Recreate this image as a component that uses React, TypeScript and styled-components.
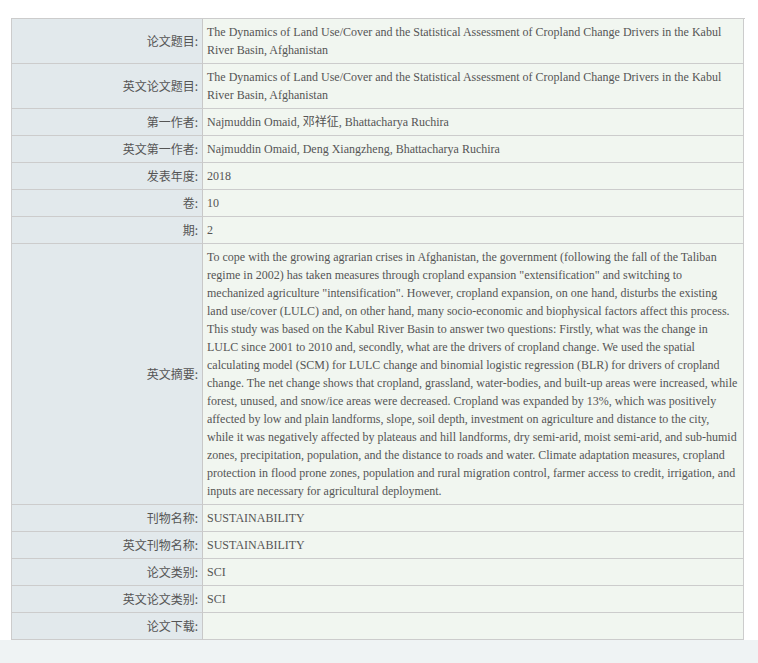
import React from 'react';
import styled, { createGlobalStyle } from 'styled-components';

const GlobalStyle = createGlobalStyle`
  html, body {
    margin: 0;
    padding: 0;
    background: #ffffff;
  }
`;

const Page = styled.div`
  padding: 18px 0 0 11px;
`;

const InfoGrid = styled.div`
  display: grid;
  grid-template-columns: 191px 541px;
  width: 733px;
  border-top: 1px solid #cccccc;
  border-left: 1px solid #cccccc;
`;

const Label = styled.div`
  display: flex;
  align-items: center;
  justify-content: flex-end;
  padding: 4px 4px 4px 4px;
  background: #e2e9ec;
  border-right: 1px solid #c8c8c8;
  border-bottom: 1px solid #cccccc;
  font-family: 'Noto Sans CJK SC', 'Liberation Sans', sans-serif;
  font-size: 12px;
  line-height: 18px;
  color: #555555;
`;

const Value = styled.div`
  padding: 4px 5px 4px 4px;
  background: #f1f6f0;
  border-right: 1px solid #cccccc;
  border-bottom: 1px solid #cccccc;
  font-family: 'Liberation Serif', 'Times New Roman', 'Noto Sans CJK SC', serif;
  font-size: 12px;
  line-height: 18px;
  color: #555555;
  min-height: 18px;
`;

const Footer = styled.div`
  height: 40px;
  margin-left: -11px;
  background: #eff3f4;
`;

interface Row {
  label: string;
  value: string;
}

const title =
  'The Dynamics of Land Use/Cover and the Statistical Assessment of Cropland Change Drivers in the Kabul River Basin, Afghanistan';

const abstract =
  'To cope with the growing agrarian crises in Afghanistan, the government (following the fall of the Taliban regime in 2002) has taken measures through cropland expansion "extensification" and switching to mechanized agriculture "intensification". However, cropland expansion, on one hand, disturbs the existing land use/cover (LULC) and, on other hand, many socio-economic and biophysical factors affect this process. This study was based on the Kabul River Basin to answer two questions: Firstly, what was the change in LULC since 2001 to 2010 and, secondly, what are the drivers of cropland change. We used the spatial calculating model (SCM) for LULC change and binomial logistic regression (BLR) for drivers of cropland change. The net change shows that cropland, grassland, water-bodies, and built-up areas were increased, while forest, unused, and snow/ice areas were decreased. Cropland was expanded by 13%, which was positively affected by low and plain landforms, slope, soil depth, investment on agriculture and distance to the city, while it was negatively affected by plateaus and hill landforms, dry semi-arid, moist semi-arid, and sub-humid zones, precipitation, population, and the distance to roads and water. Climate adaptation measures, cropland protection in flood prone zones, population and rural migration control, farmer access to credit, irrigation, and inputs are necessary for agricultural deployment.';

const rows: Row[] = [
  { label: '论文题目', value: title },
  { label: '英文论文题目', value: title },
  { label: '第一作者', value: 'Najmuddin Omaid, 邓祥征, Bhattacharya Ruchira' },
  { label: '英文第一作者', value: 'Najmuddin Omaid, Deng Xiangzheng, Bhattacharya Ruchira' },
  { label: '发表年度', value: '2018' },
  { label: '卷', value: '10' },
  { label: '期', value: '2' },
  { label: '英文摘要', value: abstract },
  { label: '刊物名称', value: 'SUSTAINABILITY' },
  { label: '英文刊物名称', value: 'SUSTAINABILITY' },
  { label: '论文类别', value: 'SCI' },
  { label: '英文论文类别', value: 'SCI' },
  { label: '论文下载', value: '' },
];

export default function App(): JSX.Element {
  return (
    <>
      <GlobalStyle />
      <Page>
        <InfoGrid>
          {rows.map((row: Row, index: number) => (
            <React.Fragment key={index}>
              <Label>{row.label}:</Label>
              <Value>{row.value}</Value>
            </React.Fragment>
          ))}
        </InfoGrid>
        <Footer />
      </Page>
    </>
  );
}
